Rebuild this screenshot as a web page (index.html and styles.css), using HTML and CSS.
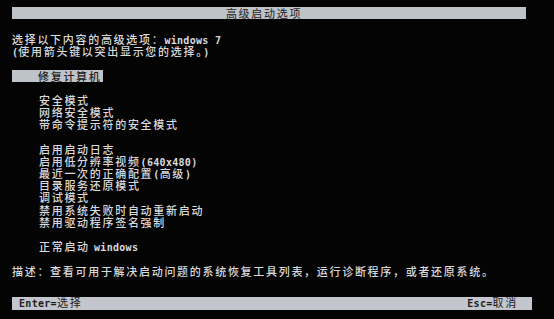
FILE: index.html
```html
<!DOCTYPE html>
<html lang="zh-CN">
<head>
<meta charset="utf-8">
<title>高级启动选项</title>
<link rel="stylesheet" href="styles.css">
</head>
<body>
<div class="screen">
  <div class="titlebar"><span class="title">高级启动选项</span></div>
  <div class="content">
    <div class="line">选择以下内容的高级选项：<span class="en">windows 7</span></div>
    <div class="line"><span class="en">(</span>使用箭头键以突出显示您的选择。<span class="en">)</span></div>
    <div class="line"></div>
    <div class="line"><span class="selected">修复计算机</span></div>
    <div class="line"></div>
    <div class="line item">安全模式</div>
    <div class="line item">网络安全模式</div>
    <div class="line item">带命令提示符的安全模式</div>
    <div class="line"></div>
    <div class="line item">启用启动日志</div>
    <div class="line item">启用低分辨率视频<span class="en">(640x480)</span></div>
    <div class="line item">最近一次的正确配置<span class="en">(</span>高级<span class="en">)</span></div>
    <div class="line item">目录服务还原模式</div>
    <div class="line item">调试模式</div>
    <div class="line item">禁用系统失败时自动重新启动</div>
    <div class="line item">禁用驱动程序签名强制</div>
    <div class="line"></div>
    <div class="line item">正常启动 <span class="en">windows</span></div>
    <div class="line"></div>
    <div class="line">描述：查看可用于解决启动问题的系统恢复工具列表，运行诊断程序，或者还原系统。</div>
  </div>
  <div class="statusbar">
    <span class="key"><span class="en">Enter=</span>选择</span>
    <span class="key"><span class="en">Esc=</span>取消</span>
  </div>
</div>
</body>
</html>
```

FILE: styles.css
```css
html, body {
  margin: 0;
  padding: 0;
  background: #040404;
}

.screen {
  width: 554px;
  height: 319px;
  padding-left: 12px;
  box-sizing: border-box;
  overflow: hidden;
  font-family: "Noto Sans CJK SC", "Noto Sans", sans-serif;
  font-size: 11px;
  font-weight: 500;
  letter-spacing: 1.7px;
  color: #d9d9dc;
}

.titlebar {
  margin-top: 7px;
  width: 514px;
  height: 12px;
  background: #bec2c9;
  display: flex;
  justify-content: center;
  align-items: center;
  padding-right: 10px;
  box-sizing: border-box;
}

.title {
  color: #1e1e22;
  font-weight: 400;
  line-height: 12px;
}

.content {
  margin-top: 14px;
}

.line {
  height: 12.2px;
  line-height: 12.2px;
  white-space: nowrap;
}

.item {
  padding-left: 27px;
}

.en {
  font-family: "DejaVu Sans Mono", "Liberation Mono", monospace;
  font-weight: bold;
  font-size: 10px;
  letter-spacing: 0.3px;
}

.selected {
  display: inline-block;
  width: 91px;
  height: 12px;
  line-height: 12px;
  padding-left: 26px;
  box-sizing: border-box;
  background: #bec2c9;
  color: #1e1e22;
}

.statusbar {
  margin-top: 20px;
  width: 520px;
  height: 13px;
  background: #c3c7cd;
  display: flex;
  justify-content: space-between;
  align-items: center;
  padding: 0 14px 0 7px;
  box-sizing: border-box;
  color: #1e1e22;
  font-weight: 400;
  line-height: 13px;
}
```
